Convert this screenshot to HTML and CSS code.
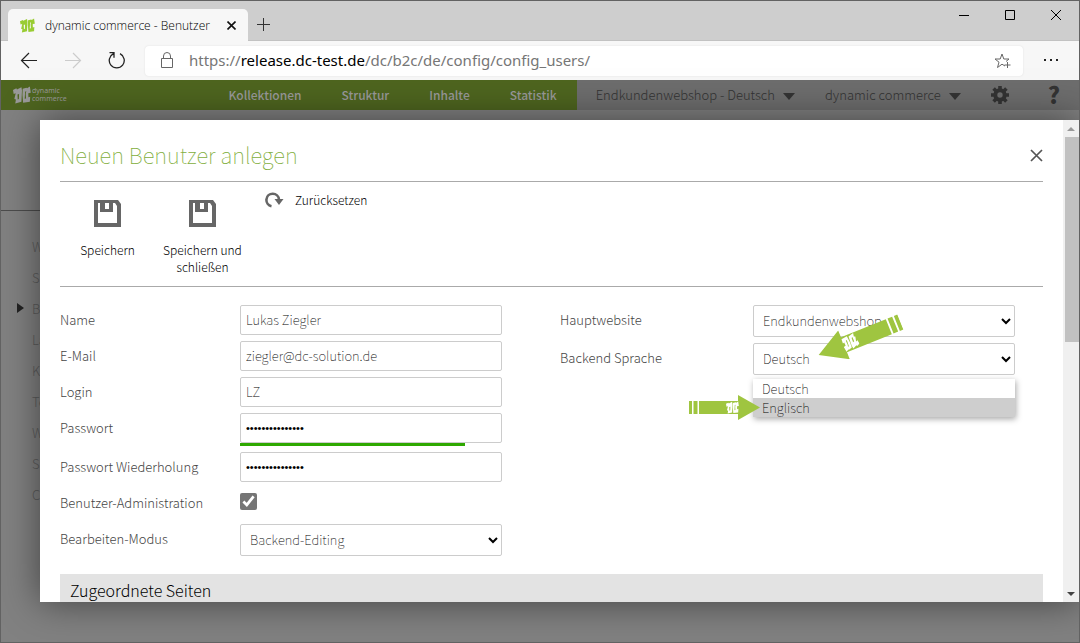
FILE: index.html
```
<!DOCTYPE html>
<html lang="de">
<head>
    <meta charset="UTF-8">
    <meta name="viewport" content="width=device-width, initial-scale=1.0">
    <title>dynamic commerce - Benutzer</title>
    <link rel="stylesheet" href="styles.css">
</head>
<body>
    <svg class="symbols" aria-hidden="true">
        <symbol id="mark" viewBox="0 0 16 16">
            <path fill-rule="evenodd" d="M0 3.500L3 2 3.500 3 7.500 1 8 4 7.500 14 2 15.500 2.600 12 1.200 11.500 2.400 6.500 0.600 7ZM4 7.500L5.400 7 5.200 11.500 4.200 12ZM8.600 2.500L12 1.500 12.500 2 15 .5 15.800 6 13.600 6.500 13.700 10 15.300 9.500 15 14 9 14.800 8.400 8ZM10.800 5L11.800 4.500 11.300 7 11.600 11 10.400 11.300Z"/>
        </symbol>
        <symbol id="arrow" viewBox="0 0 71 25">
            <path fill="#9fc540" d="M0 6h3v13H0zM4.500 6h4v13h-4zM10 6h39V0l22 12.500L49 25V19H10z"/>
            <use href="#mark" x="37" y="6" width="13" height="13" fill="#fff"/>
        </symbol>
        <symbol id="disk" viewBox="0 0 27 27">
            <path fill="#666" fill-rule="evenodd" d="M0 0h24l3 4v23H0zM4 3v20h19V6l-2-3h-2v9H6V3zM11 3v6h4V3z"/>
        </symbol>
    </svg>

    <div class="tabs">
        <div class="tab">
            <svg class="favicon" viewBox="0 0 16 16"><use href="#mark"/></svg>
            <span class="tab-title">dynamic commerce - Benutzer</span>
            <button class="icon-btn" type="button" aria-label="Tab schließen">
                <svg width="9" height="9" viewBox="0 0 9 9"><path d="M.5 .5l8 8M8.500 .5l-8 8" stroke="#111" stroke-width="1.600"/></svg>
            </button>
        </div>
        <button class="icon-btn new-tab" type="button" aria-label="Neuer Tab">
            <svg width="13" height="13" viewBox="0 0 13 13"><path d="M6.500 0v13M0 6.500h13" stroke="#333"/></svg>
        </button>
        <div class="window-buttons">
            <button class="icon-btn" type="button" aria-label="Minimieren">
                <svg width="12" height="12" viewBox="0 0 12 12"><path d="M1 6.500h10" stroke="#000"/></svg>
            </button>
            <button class="icon-btn" type="button" aria-label="Maximieren">
                <svg width="12" height="12" viewBox="0 0 12 12"><path d="M1.500 1.500h9v9h-9z" fill="none" stroke="#000"/></svg>
            </button>
            <button class="icon-btn" type="button" aria-label="Schließen">
                <svg width="12" height="12" viewBox="0 0 12 12"><path d="M1 1l10 10M11 1L1 11" stroke="#000"/></svg>
            </button>
        </div>
    </div>

    <div class="toolbar">
        <button class="icon-btn" type="button" aria-label="Zurück">
            <svg width="18" height="18" viewBox="0 0 18 18"><path d="M17 8.500H1.500M9 1L1.500 8.500 9 16" fill="none" stroke="#222" stroke-width="1.200"/></svg>
        </button>
        <button class="icon-btn" type="button" aria-label="Vorwärts">
            <svg width="18" height="18" viewBox="0 0 18 18"><path d="M1 8.500h15.500M9 1L16.500 8.500 9 16" fill="none" stroke="#ccc" stroke-width="1.200"/></svg>
        </button>
        <button class="icon-btn" type="button" aria-label="Neu laden">
            <svg width="18" height="18" viewBox="0 0 18 18"><path d="M12 1.700A7.500 7.500 0 1 1 5.500 1.700M1.500 .7h4.500v5" fill="none" stroke="#222" stroke-width="1.300"/></svg>
        </button>
        <div class="address">
            <svg width="14" height="18" viewBox="0 0 14 18"><path d="M1.500 6.500h11v9h-11zM3.500 6.500V4a3.500 3.500 0 0 1 7 0v2.500" fill="none" stroke="#666"/></svg>
            <span class="url">https://<b>release.dc-test.de</b>/dc/b2c/de/config/config_users/</span>
            <svg width="18" height="16" viewBox="0 0 18 16"><path d="M11 13L8 11.200 3.500 14.500 5 9.200 1 6h5.200L8 1l1.800 5H15l-3 2.500M13.500 9v6M10.500 12h6" fill="none" stroke="#666"/></svg>
        </div>
        <button class="icon-btn" type="button" aria-label="Menü">
            <svg width="14" height="4" viewBox="0 0 14 4"><path d="M0 0h2v2H0zM6 0h2v2H6zM12 0h2v2h-2z" fill="#222"/></svg>
        </button>
    </div>

    <div class="page">
        <header class="header">
            <div class="header-main">
                <div class="logo">
                    <svg width="18" height="18" viewBox="0 0 16 16" fill="#999"><use href="#mark"/></svg>
                    <span>dynamic<br>commerce</span>
                </div>
                <nav class="nav">
                    <a href="#">Kollektionen</a>
                    <a href="#">Struktur</a>
                    <a href="#">Inhalte</a>
                    <a href="#">Statistik</a>
                </nav>
            </div>
            <div class="header-tools">
                <button class="switch" type="button">Endkundenwebshop - Deutsch</button>
                <button class="switch" type="button">dynamic commerce</button>
                <button class="icon-btn" type="button" aria-label="Einstellungen">
                    <svg width="18" height="18" viewBox="0 0 18 18"><circle cx="9" cy="9" r="4.700" fill="none" stroke="#333" stroke-width="4"/><path d="M9 0v4M9 14v4M0 9h4M14 9h4M2.600 2.600l3 3M12.400 12.400l3 3M15.400 2.600l-3 3M5.600 12.400l-3 3" stroke="#333" stroke-width="3.600"/></svg>
                </button>
                <button class="help" type="button" aria-label="Hilfe">?</button>
            </div>
        </header>

        <aside class="sidebar">
            <ul>
                <li>We</li>
                <li>Sp</li>
                <li class="current">Be</li>
                <li>Lä</li>
                <li>Ko</li>
                <li>Te</li>
                <li>We</li>
                <li>Sp</li>
                <li>Ca</li>
            </ul>
        </aside>

        <div class="modal" role="dialog" aria-labelledby="modal-title">
            <div class="modal-content">
                <div class="modal-head">
                    <h1 id="modal-title">Neuen Benutzer anlegen</h1>
                    <button class="icon-btn" type="button" aria-label="Dialog schließen">
                        <svg width="13" height="13" viewBox="0 0 13 13"><path d="M1 1l11 11M12 1L1 12" stroke="#555" stroke-width="1.700"/></svg>
                    </button>
                </div>

                <div class="actions">
                    <button class="action" type="button">
                        <svg width="27" height="27"><use href="#disk"/></svg>
                        Speichern
                    </button>
                    <button class="action" type="button">
                        <svg width="27" height="27"><use href="#disk"/></svg>
                        Speichern und schließen
                    </button>
                    <button class="action-small" type="button">
                        <svg width="19" height="16" viewBox="0 0 19 16"><path d="M6.500 14.200A6.300 6.300 0 1 1 14 7.500" fill="none" stroke="#666" stroke-width="2.600"/><path d="M9.500 7h9l-4.500 6z" fill="#666"/></svg>
                        Zurücksetzen
                    </button>
                </div>

                <form class="form">
                    <div class="column">
                        <div class="field">
                            <label for="name">Name</label>
                            <input type="text" id="name" value="Lukas Ziegler">
                        </div>
                        <div class="field">
                            <label for="email">E-Mail</label>
                            <input type="text" id="email" value="ziegler@dc-solution.de">
                        </div>
                        <div class="field">
                            <label for="login">Login</label>
                            <input type="text" id="login" value="LZ">
                        </div>
                        <div class="field">
                            <label for="password">Passwort</label>
                            <div class="password">
                                <input type="password" id="password" value="abcdefghijklmno">
                                <div class="strength"><div class="strength-bar" style="width: 86%"></div></div>
                            </div>
                        </div>
                        <div class="field">
                            <label for="repeat">Passwort Wiederholung</label>
                            <input type="password" id="repeat" value="abcdefghijklmno">
                        </div>
                        <div class="field">
                            <label for="admin">Benutzer-Administration</label>
                            <input type="checkbox" id="admin" checked>
                        </div>
                        <div class="field">
                            <label for="mode">Bearbeiten-Modus</label>
                            <select id="mode"><option>Backend-Editing</option></select>
                        </div>
                    </div>
                    <div class="column column-wide">
                        <div class="field">
                            <label for="website">Hauptwebsite</label>
                            <select id="website"><option>Endkundenwebshop</option></select>
                        </div>
                        <div class="field language">
                            <label for="language">Backend Sprache</label>
                            <select id="language"><option>Deutsch</option><option>Englisch</option></select>
                            <ul class="options">
                                <li>Deutsch</li>
                                <li class="active">Englisch</li>
                            </ul>
                            <svg class="arrow arrow-select"><use href="#arrow"/></svg>
                            <svg class="arrow arrow-option"><use href="#arrow"/></svg>
                        </div>
                    </div>
                </form>

                <h2>Zugeordnete Seiten</h2>
            </div>
            <div class="scrollbar">
                <div class="scroll-up"></div>
                <div class="thumb"></div>
                <div class="scroll-down"></div>
            </div>
        </div>
    </div>
</body>
</html>
```
FILE: styles.css
```
* {
    box-sizing: border-box;
}

body {
    display: flex;
    flex-direction: column;
    height: 100vh;
    margin: 0;
    border: 1px solid #626262;
    overflow: hidden;
    font-family: "Noto Sans CJK SC", "Noto Sans", sans-serif;
    font-size: 13px;
    color: #000;
    background: #cecece;
}

button {
    font: inherit;
    color: inherit;
    padding: 0;
    border: 0;
    background: none;
}

ul {
    list-style: none;
    margin: 0;
    padding: 0;
}

svg {
    display: block;
    flex: none;
}

.symbols {
    position: absolute;
    width: 0;
    height: 0;
}

.icon-btn {
    display: flex;
    align-items: center;
    justify-content: center;
}

/* Browser */
.tabs {
    display: flex;
    align-items: flex-end;
    height: 40px;
    padding-left: 7px;
    border-bottom: 1px solid #c2c2c2;
    font-family: "Open Sans", sans-serif;
    font-size: 12px;
    font-weight: 300;
}

.tab {
    display: flex;
    align-items: center;
    width: 240px;
    height: 32px;
    margin-bottom: -1px;
    padding: 0 12px;
    border-radius: 5px 5px 0 0;
    background: #f7f7f7;
}

.favicon {
    width: 15px;
    height: 15px;
    margin-right: 10px;
    fill: #9c3;
}

.tab-title {
    flex: 1;
    white-space: nowrap;
}

.new-tab {
    height: 32px;
    margin-left: 9px;
}

.window-buttons {
    display: flex;
    align-self: flex-start;
    gap: 34px;
    height: 28px;
    margin-left: auto;
    padding-right: 17px;
}

.toolbar {
    display: flex;
    align-items: center;
    gap: 26px;
    height: 39px;
    padding: 0 21px 0 19px;
    background: #f7f7f7;
}

.address {
    display: flex;
    flex: 1;
    align-items: center;
    gap: 15px;
    height: 30px;
    margin: 0 -5px 0 -7px;
    padding: 0 11px 0 15px;
    border-radius: 4px;
    background: #fff;
    box-shadow: 0 0 2px rgba(0, 0, 0, 0.1);
}

.url {
    flex: 1;
    padding-bottom: 2px;
    font-family: "Noto Sans", sans-serif;
    font-size: 15px;
    color: #767676;
}

.url b {
    font-weight: normal;
    color: #000;
}

/* Dimmed page */
.page {
    position: relative;
    flex: 1;
    min-height: 0;
    background: #818181;
}

.header {
    display: flex;
    height: 30px;
    color: #333;
    background: #6d6d6d;
}

.header-main {
    display: flex;
    flex: 1;
    align-items: center;
    justify-content: space-between;
    padding-left: 12px;
    color: #999;
    background: #4e651f;
}

.logo {
    display: flex;
    align-items: center;
    gap: 1px;
    font-family: "Noto Sans", sans-serif;
    font-size: 7px;
    line-height: 8px;
}

.nav {
    display: flex;
    gap: 40px;
    padding: 0 20px 2px 0;
    font-size: 12px;
}

.nav a {
    font-weight: 500;
    color: inherit;
    text-decoration: none;
}

.header-tools {
    display: flex;
    align-items: center;
    gap: 30px;
    padding: 0 19px;
}

.switch {
    padding-bottom: 2px;
    font-weight: 300;
}

.switch::after {
    content: "";
    display: inline-block;
    margin-left: 8px;
    border: 6px solid transparent;
    border-top: 7px solid #333;
    border-bottom: 0;
}

.help {
    margin-left: 9px;
    padding-bottom: 2px;
    font-size: 23px;
    font-weight: 900;
    line-height: 28px;
}

.sidebar {
    width: 39px;
    margin-top: 100px;
    padding-top: 20px;
    border-top: 1px solid #4c4c4c;
    overflow: hidden;
    color: #5c5c5c;
    font-weight: 300;
}

.sidebar li {
    padding-left: 31px;
    line-height: 31px;
}

.sidebar .current::before {
    content: "";
    float: left;
    margin: 10px 0 0 -15px;
    border: 5px solid transparent;
    border-left: 7px solid #222;
    border-right: 0;
}

/* Dialog */
.modal {
    position: absolute;
    inset: 40px 0 40px 39px;
    display: flex;
    overflow: hidden;
    background: #fff;
}

.page::after {
    content: "";
    position: absolute;
    inset: 40px 0 40px 39px;
    box-shadow: 0 0 35px rgba(0, 0, 0, 0.5);
    pointer-events: none;
}

.modal-content {
    flex: 1;
    padding: 0 20px;
}

.modal-head {
    display: flex;
    align-items: center;
    justify-content: space-between;
    height: 62px;
    padding-top: 9px;
    border-bottom: 1px solid #aaa;
}

h1 {
    margin: 0;
    padding-bottom: 2px;
    font-size: 22px;
    font-weight: 100;
    color: #7fae3c;
}

.actions {
    display: flex;
    align-items: flex-start;
    height: 105px;
    padding-top: 18px;
    border-bottom: 1px solid #aaa;
    font-size: 12px;
    line-height: 17px;
}

.action {
    display: flex;
    flex-direction: column;
    align-items: center;
    gap: 14px;
    width: 95px;
}

.action-small {
    display: flex;
    align-items: center;
    gap: 11px;
    margin: -9px 0 0 15px;
}

.action,
.action-small {
    font-weight: 300;
}

.form {
    display: flex;
    gap: 58px;
    padding: 18px 28px 12px 0;
}

.column {
    flex: 442px 0 1;
}

.column-wide {
    flex: 455px 0 1;
}

.field {
    display: flex;
    align-items: flex-start;
    margin-bottom: 6px;
}

.field label {
    flex: 1;
    font-weight: 300;
    line-height: 30px;
    color: #444;
}

input,
select,
.password,
.options {
    width: 262px;
}

input,
select {
    height: 30px;
    padding: 0 5px 2px;
    border: 1px solid #ccc;
    border-radius: 2px;
    font: inherit;
    font-weight: 100;
    color: #000;
    background: #fff;
}

select {
    height: 32px;
    padding: 0 5px 2px;
}

input[type="password"] {
    padding-bottom: 0;
    font-family: "Liberation Sans", sans-serif;
    font-size: 11px;
}

input[type="checkbox"] {
    width: 17px;
    height: 17px;
    margin: 5px 245px 0 0;
    accent-color: #757575;
}

.password input {
    display: block;
}

.strength-bar {
    height: 3px;
    background: #2ea800;
}

.language {
    position: relative;
}

.options {
    position: absolute;
    top: 36px;
    right: 0;
    background: #fff;
    box-shadow: 1px 2px 6px rgba(0, 0, 0, 0.35);
    font-weight: 100;
    line-height: 19px;
}

.options li {
    padding-left: 9px;
}

.options .active {
    background: #cecece;
}

.arrow {
    position: absolute;
    width: 71px;
    height: 25px;
}

.arrow-option {
    top: 52px;
    right: 255px;
}

.arrow-select {
    top: -20px;
    right: 111px;
    width: 89px;
    height: 31px;
    transform: rotate(158deg);
}

h2 {
    margin: 0;
    padding: 0 10px;
    font-size: 16px;
    font-weight: 300;
    line-height: 32px;
    background: #e3e3e3;
}

.scrollbar {
    display: flex;
    flex-direction: column;
    width: 16px;
    background: #f0f0f0;
}

.scroll-up,
.scroll-down {
    margin: 7px auto 6px;
    border: 4px solid transparent;
}

.scroll-up {
    border-top: 0;
    border-bottom-color: #999;
}

.thumb {
    height: 205px;
    margin-left: 2px;
    background: #c1c1c1;
}

.scroll-down {
    margin-top: auto;
    border-top-color: #444;
    border-bottom: 0;
}
```
